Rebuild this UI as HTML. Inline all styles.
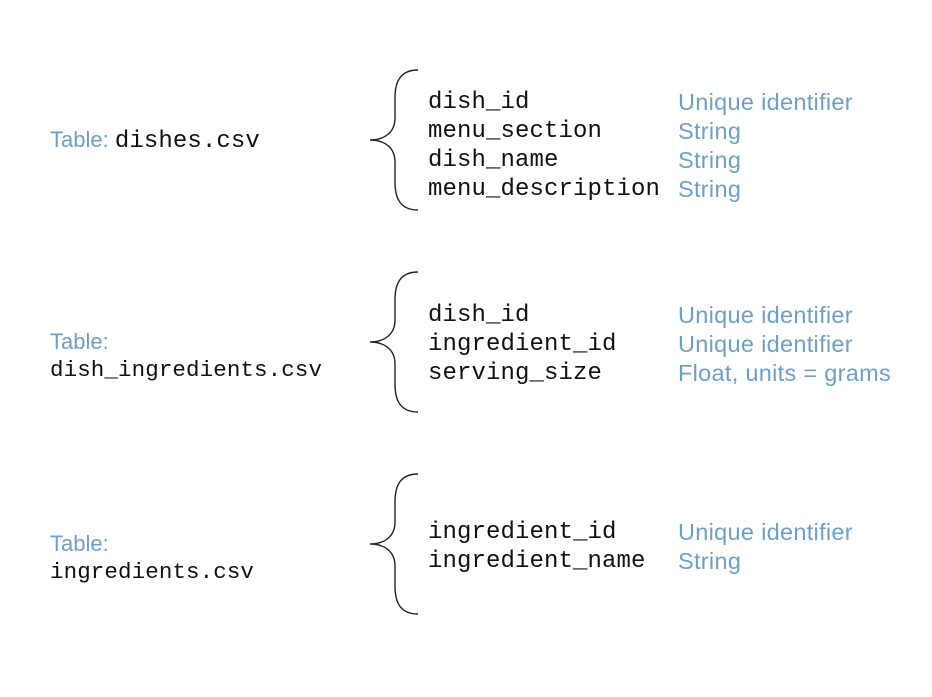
<!DOCTYPE html>
<html><head><style>
body{margin:0;width:932px;height:697px;background:#fff;position:relative;overflow:hidden}
.m{position:absolute;font-family:"Liberation Mono","DejaVu Sans Mono",monospace;font-size:24px;line-height:29px;color:#111;white-space:pre;letter-spacing:0.1px}
.b{position:absolute;font-family:"Liberation Sans",sans-serif;font-size:22px;line-height:29px;color:#6f9fc4;white-space:pre}
.r{font-size:23.5px;letter-spacing:0.3px}
.s{font-size:22.5px}
svg{position:absolute;left:0;top:0}
</style></head><body>
<svg width="932" height="697" fill="none" stroke="#222" stroke-width="1.4">
<path d="M418 70 C400 70 395 82 395 98 L395 118 C395 132 385 140 370 140 C385 140 395 148 395 162 L395 182 C395 198 400 210 418 210"/>
<path d="M418 272 C400 272 395 284 395 300 L395 320 C395 334 385 342 370 342 C385 342 395 350 395 364 L395 384 C395 400 400 412 418 412"/>
<path d="M418 474 C400 474 395 486 395 502 L395 522 C395 536 385 544 370 544 C385 544 395 552 395 566 L395 586 C395 602 400 614 418 614"/>
</svg>
<div class="b" style="left:50px;top:125px">Table: <span class="m" style="position:static">dishes.csv</span></div>
<div class="m" style="left:428px;top:88px">dish_id
menu_section
dish_name
menu_description</div>
<div class="b r" style="left:678px;top:88px">Unique identifier
String
String
String</div>
<div class="b" style="left:50px;top:327px">Table:</div>
<div class="m s" style="left:50px;top:356px">dish_ingredients.csv</div>
<div class="m" style="left:428px;top:301px">dish_id
ingredient_id
serving_size</div>
<div class="b r" style="left:678px;top:301px">Unique identifier
Unique identifier
Float, units = grams</div>
<div class="b" style="left:50px;top:529px">Table:</div>
<div class="m s" style="left:50px;top:558px">ingredients.csv</div>
<div class="m" style="left:428px;top:518px">ingredient_id
ingredient_name</div>
<div class="b r" style="left:678px;top:518px">Unique identifier
String</div>
</body></html>
